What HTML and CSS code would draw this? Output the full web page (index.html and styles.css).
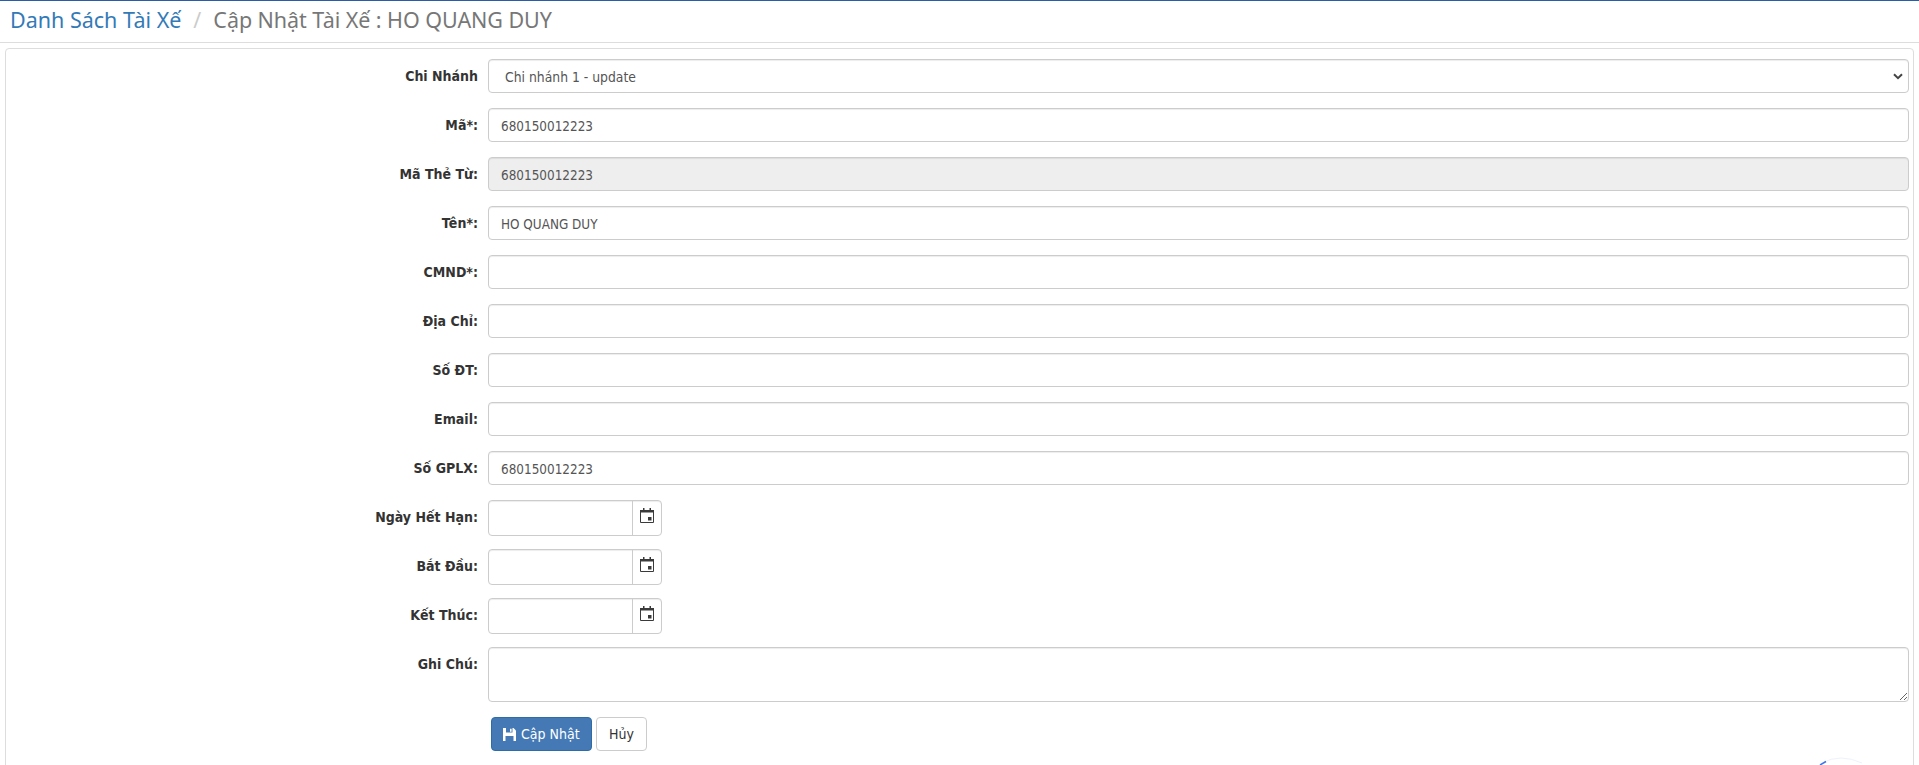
FILE: index.html
```html
<!DOCTYPE html>
<html lang="vi">
<head>
<meta charset="utf-8">
<title>Cập Nhật Tài Xế</title>
<link rel="stylesheet" href="styles.css">
</head>
<body>
<header class="page-head">
  <a class="crumb-link" href="#">Danh Sách Tài Xế</a><span class="crumb-sep">/</span><span class="crumb-current">Cập Nhật Tài Xế : HO QUANG DUY</span>
</header>
<main class="panel">
  <form class="form">
    <div class="row"><label class="lbl">Chi Nhánh</label>
      <div class="select"><span>Chi nhánh 1 - update</span>
        <svg class="chev" width="10" height="7" viewBox="0 0 10 7"><path d="M1 1.200 5 5.200 9 1.200" fill="none" stroke="#444" stroke-width="2"/></svg>
      </div></div>
    <div class="row"><label class="lbl">Mã*:</label><input class="field" value="680150012223"></div>
    <div class="row"><label class="lbl">Mã Thẻ Từ:</label><input class="field disabled" value="680150012223" disabled></div>
    <div class="row"><label class="lbl">Tên*:</label><input class="field" value="HO QUANG DUY"></div>
    <div class="row"><label class="lbl">CMND*:</label><input class="field"></div>
    <div class="row"><label class="lbl">Địa Chỉ:</label><input class="field"></div>
    <div class="row"><label class="lbl">Số ĐT:</label><input class="field"></div>
    <div class="row"><label class="lbl">Email:</label><input class="field"></div>
    <div class="row"><label class="lbl">Số GPLX:</label><input class="field" value="680150012223"></div>
    <div class="row date-row"><label class="lbl">Ngày Hết Hạn:</label>
      <div class="date"><input class="date-input"><span class="addon"><svg class="cal" width="14" height="15" viewBox="0 0 14 15"><path d="M.5 2.500h13v12H.5z" fill="#fff" stroke="#3a3a3a"/><path d="M0 2h14v2.500H0z" fill="#3a3a3a"/><path d="M3 0h1.500v3H3zM9.500 0H11v3H9.500z" fill="#3a3a3a"/><path d="M8 9h3.500v3.500H8z" fill="#3a3a3a"/></svg></span></div></div>
    <div class="row date-row"><label class="lbl">Bắt Đầu:</label>
      <div class="date"><input class="date-input"><span class="addon"><svg class="cal" width="14" height="15" viewBox="0 0 14 15"><path d="M.5 2.500h13v12H.5z" fill="#fff" stroke="#3a3a3a"/><path d="M0 2h14v2.500H0z" fill="#3a3a3a"/><path d="M3 0h1.500v3H3zM9.500 0H11v3H9.500z" fill="#3a3a3a"/><path d="M8 9h3.500v3.500H8z" fill="#3a3a3a"/></svg></span></div></div>
    <div class="row date-row"><label class="lbl">Kết Thúc:</label>
      <div class="date"><input class="date-input"><span class="addon"><svg class="cal" width="14" height="15" viewBox="0 0 14 15"><path d="M.5 2.500h13v12H.5z" fill="#fff" stroke="#3a3a3a"/><path d="M0 2h14v2.500H0z" fill="#3a3a3a"/><path d="M3 0h1.500v3H3zM9.500 0H11v3H9.500z" fill="#3a3a3a"/><path d="M8 9h3.500v3.500H8z" fill="#3a3a3a"/></svg></span></div></div>
    <div class="row"><label class="lbl">Ghi Chú:</label><textarea class="field area"></textarea></div>
    <div class="actions">
      <button type="button" class="btn primary"><svg width="13" height="13" viewBox="0 0 13 13"><path d="M0 0h10.500L13 2.500V13H0z" fill="#fff"/><path d="M3 0h6.500v4.500H3z" fill="#4479b5"/><path d="M7 .8h1.600v3H7z" fill="#fff"/><path d="M2.500 8h8v5h-8z" fill="#4479b5"/></svg>Cập Nhật</button>
      <button type="button" class="btn cancel">Hủy</button>
    </div>
  </form>
</main>
<svg class="loader" width="50" height="10" viewBox="0 0 50 10"><path d="M6 8Q24 -2 46 8" fill="none" stroke="#eef2fd" stroke-width="1"/><path d="M4 10 10 6.500" fill="none" stroke="#3f73e8" stroke-width="1.500"/></svg>
</body>
</html>
```

FILE: styles.css
```css
* { box-sizing: border-box; }
html, body { margin: 0; height: 765px; overflow: hidden; background: #fff; }
body {
  border-top: 1px solid #2a5ca8;
  font-family: "DejaVu Sans Condensed", "DejaVu Sans", sans-serif;
  font-size: 14px;
  color: #555;
}
.page-head {
  height: 42px;
  padding-left: 10px;
  border-bottom: 1px solid #ddd;
  font-family: "Noto Sans", sans-serif;
  font-size: 21.500px;
  line-height: 38px;
  color: #777;
  white-space: nowrap;
}
.crumb-link { color: #337ab7; text-decoration: none; }
.crumb-sep { color: #ccc; padding: 0 12px; }
.crumb-current { letter-spacing: -.06px; }
.panel {
  margin: 5px 5px 0;
  height: 730px;
  padding-top: 10px;
  border: 1px solid #ddd;
  border-radius: 4px;
}
.form { padding-right: 4px; }
.row {
  display: grid;
  grid-template-columns: 472px 1fr;
  column-gap: 10px;
  margin-bottom: 15px;
}
.date-row { margin-bottom: 13px; }
.lbl {
  padding-top: 8px;
  text-align: right;
  font-weight: 700;
  line-height: 18px;
  color: #333;
}
.field, .select, .date {
  height: 34px;
  border: 1px solid #ccc;
  border-radius: 4px;
  box-shadow: inset 0 1px 1px rgba(0,0,0,.075);
  background: #fff;
  font: inherit;
  color: #555;
}
.field { display: block; width: 100%; padding: 7px 12px 5px; outline: 0; font-size: 13.400px; }
.field.disabled { background: #eee; }
.area { height: 55px; resize: vertical; }
.select {
  display: flex;
  align-items: center;
  justify-content: space-between;
  padding: 1px 5px 0 16px;
  font-size: 13.800px;
}
.date {
  display: flex;
  width: 174px;
  height: 36px;
  overflow: hidden;
}
.date-input {
  flex: 1;
  min-width: 0;
  border: 0;
  outline: 0;
  background: transparent;
}
.addon {
  display: flex;
  width: 29px;
  padding-bottom: 5px;
  align-items: center;
  justify-content: center;
  border-left: 1px solid #ccc;
}
.actions { display: flex; gap: 4px; padding-left: 485px; }
.btn {
  display: flex;
  height: 34px;
  align-items: center;
  padding: 0 12px;
  gap: 5px;
  border: 1px solid #ccc;
  border-radius: 4px;
  background: #fff;
  font: inherit;
  color: #333;
}
.cancel { width: 51px; justify-content: center; }
.primary {
  width: 101px;
  padding: 0 11px;
  border-color: #2e6da4;
  background: #4479b5;
  color: #fff;
}
.loader { position: absolute; left: 1816px; bottom: 0; }
```
